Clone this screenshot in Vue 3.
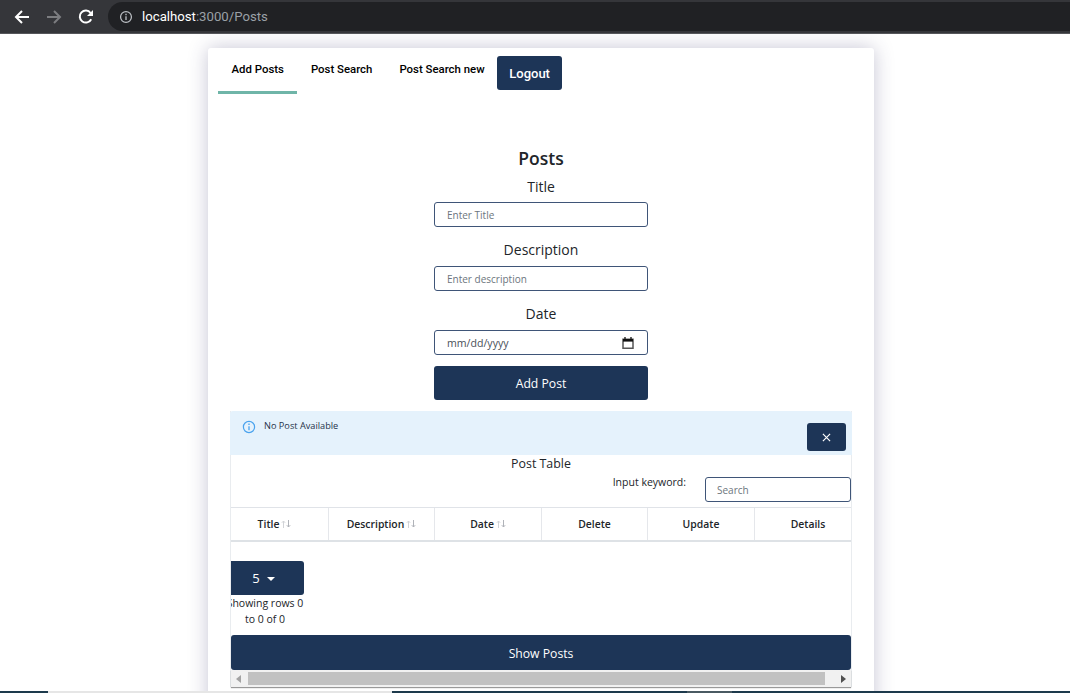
<template>
  <div class="page">
    <header class="chrome">
      <svg class="nav-icon" viewBox="0 0 16 16" width="16" height="16">
        <path d="M15 8H2M8 2 2 8l6 6" fill="none" stroke="#fff" stroke-width="2" />
      </svg>
      <svg class="nav-icon" viewBox="0 0 16 16" width="16" height="16">
        <path d="M1 8h13M8 2l6 6-6 6" fill="none" stroke="#7c7d80" stroke-width="2" />
      </svg>
      <svg class="nav-icon" viewBox="0 0 16 16" width="16" height="16">
        <path d="M13.2 10.2A6 6 0 1 1 12.6 4" fill="none" stroke="#fff" stroke-width="2" />
        <path d="M15 1v6H9z" fill="#fff" />
      </svg>
      <div class="omnibox">
        <svg viewBox="0 0 16 16" width="14" height="14">
          <circle cx="8" cy="8" r="6.2" fill="none" stroke="#bdc1c6" stroke-width="1.4" />
          <path d="M8 7v4.4M8 4.4v1.5" stroke="#bdc1c6" stroke-width="1.5" />
        </svg>
        <span class="url"><b>localhost</b>:3000/Posts</span>
      </div>
    </header>

    <main class="content">
      <div class="card">
        <nav class="tabs">
          <a
            v-for="(tab, i) in tabs"
            :key="tab"
            class="tab"
            :class="{ active: i === 0 }"
          >{{ tab }}</a>
          <button class="btn logout">Logout</button>
        </nav>

        <form class="post-form">
          <h2>Posts</h2>
          <label>Title</label>
          <input class="field" placeholder="Enter Title" />
          <label>Description</label>
          <input class="field" placeholder="Enter description" />
          <label>Date</label>
          <div class="field date-field">
            <span>mm/dd/yyyy</span>
            <svg viewBox="0 0 14 14" width="14" height="14">
              <path d="M2 3.2h10v9H2z" fill="none" stroke="#555" stroke-width="1.5" />
              <path d="M2 3h10v2.6H2z" fill="#111" />
              <path d="M4 1v2M10 1v2" stroke="#222" stroke-width="1.4" />
            </svg>
          </div>
          <button type="button" class="btn add-btn">Add Post</button>
        </form>

        <section class="panel">
          <div class="alert">
            <svg class="alert-icon" viewBox="0 0 14 14" width="14" height="14">
              <circle cx="7" cy="7" r="5.6" fill="none" stroke="#4aa3ee" stroke-width="1.2" />
              <path d="M7 6.2v4M7 3.6v1.4" stroke="#4aa3ee" stroke-width="1.3" />
            </svg>
            <span class="alert-text">No Post Available</span>
            <button class="btn close-btn">
              <svg viewBox="0 0 10 10" width="9" height="9">
                <path d="M1 1l8 8M9 1 1 9" stroke="#fff" stroke-width="1.3" />
              </svg>
            </button>
          </div>

          <div class="table-title">Post Table</div>
          <div class="search-row">
            <span class="search-label">Input keyword:</span>
            <input class="search" placeholder="Search" />
          </div>

          <div class="thead">
            <div v-for="col in columns" :key="col.name" class="th">
              {{ col.name }}
              <svg v-if="col.sort" class="sort" viewBox="0 0 10 8" width="10" height="8">
                <path d="M2.5 8V1M.8 2.8 2.5 1l1.7 1.8" fill="none" stroke="#d2d4d8" />
                <path d="M7.5 0v7M5.8 5.2 7.5 7l1.7-1.8" fill="none" stroke="#b0b3b9" />
              </svg>
            </div>
          </div>

          <div class="pager">
            <button class="btn size-btn">5<i class="caret"></i></button>
            <div class="rows-info">Showing rows 0 to 0 of 0</div>
          </div>

          <button class="btn show-btn">Show Posts</button>

          <div class="scrollbar">
            <i class="arrow left"></i>
            <div class="thumb"></div>
            <i class="arrow right"></i>
          </div>
        </section>
      </div>
    </main>

    <div class="taskbar">
      <div class="seg dark start"></div>
      <div class="seg light"></div>
      <div class="seg dark mid"></div>
      <div class="seg gray"></div>
      <div class="seg dark end"></div>
    </div>
  </div>
</template>

<script setup>
const tabs = ['Add Posts', 'Post Search', 'Post Search new']

const columns = [
  { name: 'Title', sort: true },
  { name: 'Description', sort: true },
  { name: 'Date', sort: true },
  { name: 'Delete' },
  { name: 'Update' },
  { name: 'Details' },
]
</script>

<style>
html,
body {
  margin: 0;
  overflow: hidden;
}
</style>

<style scoped>
.page {
  height: 693px;
  overflow: hidden;
  display: flex;
  flex-direction: column;
  background: #fff;
  color: #212529;
  font-family: "Open Sans", "Noto Sans", sans-serif;
}
.chrome {
  flex: none;
  box-sizing: border-box;
  height: 34px;
  display: flex;
  align-items: center;
  padding-left: 14px;
  gap: 16px;
  background: #35363a;
  border-bottom: 1px solid #55565a;
}
.nav-icon {
  flex: none;
}
.omnibox {
  flex: 1;
  height: 29px;
  margin-left: -2px;
  border-radius: 15px 0 0 15px;
  background: #202124;
  display: flex;
  align-items: center;
  gap: 9px;
  padding-left: 11px;
}
.url {
  font: 13.2px "Roboto", sans-serif;
  color: #9aa0a6;
}
.url b {
  font-weight: 400;
  color: #fff;
}
.content {
  flex: 1;
  min-height: 0;
  overflow: hidden;
  padding-top: 14px;
  padding-left: 208px;
}
.card {
  box-sizing: border-box;
  width: 666px;
  height: 700px;
  padding: 0 22px;
  border-radius: 3px;
  background: #fff;
  box-shadow: 0 0 20px rgba(50, 45, 100, 0.28);
}
.tabs {
  display: flex;
  align-items: flex-start;
  height: 46px;
  margin: 0 0 0 -12px;
}
.tab {
  box-sizing: border-box;
  height: 46px;
  padding: 14px 13.5px 0;
  font: 500 11.4px "Roboto", sans-serif;
  line-height: 14px;
  color: #000;
  white-space: nowrap;
}
.tab.active {
  border-bottom: 3px solid #6fb5a8;
}
.btn {
  border: 0;
  border-radius: 3px;
  background: #1d3557;
  color: #fff;
  font-family: inherit;
  cursor: pointer;
}
.logout {
  width: 65px;
  height: 34px;
  margin: 8px 0 0 -1px;
  font: 500 13px "Roboto", sans-serif;
}
.post-form {
  display: flex;
  flex-direction: column;
  align-items: center;
  padding-top: 53px;
}
.post-form h2 {
  margin: 0;
  height: 22px;
  font-size: 17.5px;
  font-weight: 600;
  line-height: 22px;
}
.post-form label {
  height: 27px;
  margin-top: 6px;
  font-size: 14px;
  line-height: 24px;
}
.post-form .field + label {
  margin-top: 7px;
  height: 32px;
  line-height: 31px;
}
.field {
  box-sizing: border-box;
  width: 214px;
  height: 25px;
  padding: 0 12px;
  border: 1px solid #3f5578;
  border-radius: 3px;
  font-family: inherit;
  font-size: 10px;
  outline: none;
}
.field::placeholder,
.search::placeholder {
  color: #6c757d;
}
.date-field {
  display: flex;
  align-items: center;
  justify-content: space-between;
  font-size: 10.6px;
  color: #495057;
  padding-right: 12px;
}
.add-btn {
  width: 214px;
  height: 34px;
  margin-top: 11px;
  font-size: 12.2px;
}
.panel {
  margin-top: 11px;
  border-right: 1px solid #e9ecef;
  border-left: 1px solid #e9ecef;
}
.alert {
  display: flex;
  height: 44px;
  box-sizing: border-box;
  margin: 0 -1px;
  padding: 8px 6px 0 12px;
  border-radius: 3px 3px 0 0;
  background: #e5f2fc;
}
.alert-icon {
  margin-top: 1px;
}
.alert-text {
  margin-left: 8px;
  font-size: 9.2px;
  line-height: 14px;
  color: #26324a;
}
.close-btn {
  width: 39px;
  height: 28px;
  margin: 4px 0 0 auto;
  padding: 0;
}
.table-title {
  height: 18px;
  text-align: center;
  font-size: 12.4px;
  line-height: 17px;
}
.search-row {
  display: flex;
  justify-content: flex-end;
  height: 34px;
}
.search-label {
  margin: 2px 19px 0 0;
  font-size: 10.5px;
  line-height: 14px;
}
.search {
  box-sizing: border-box;
  width: 146px;
  height: 25px;
  margin-top: 4px;
  padding: 0 11px;
  border: 1px solid #3f5578;
  border-radius: 3px;
  font-family: inherit;
  font-size: 10px;
  outline: none;
}
.thead {
  display: grid;
  grid-template-columns: 98px 106px 107px 106px 107px 96px;
  height: 35px;
  box-sizing: border-box;
  border-top: 1px solid #e0e3e8;
  border-bottom: 2px solid #dee2e6;
}
.th {
  display: flex;
  align-items: center;
  justify-content: center;
  gap: 2px;
  border-right: 1px solid #e5e7eb;
  font-size: 10.4px;
  font-weight: 600;
}
/* the real table is scrolled sideways, so the outer cells look off-centre */
.th:first-child {
  padding-right: 10px;
}
.th:last-child {
  border-right: 0;
  padding-left: 10px;
}
.pager {
  width: 73px;
  padding-top: 19px;
  overflow: hidden;
  text-align: center;
}
.size-btn {
  display: block;
  width: 73px;
  height: 34px;
  padding: 0 8px 0 0;
  border-radius: 0 3px 3px 0;
  font-size: 13px;
}
.caret {
  display: inline-block;
  margin-left: 7px;
  vertical-align: 2px;
  border-top: 4px solid #fff;
  border-right: 4px solid transparent;
  border-left: 4px solid transparent;
}
.rows-info {
  box-sizing: border-box;
  width: 78px;
  height: 40px;
  margin-left: -5px;
  font-size: 10.5px;
  line-height: 16px;
}
.show-btn {
  display: block;
  width: 100%;
  height: 35px;
  padding-top: 2px;
  font-size: 12.2px;
}
.scrollbar {
  display: flex;
  align-items: center;
  height: 17px;
  background: #f1f1f1;
  box-shadow: 0 1px 1px #999;
}
.thumb {
  flex: 1;
  height: 13px;
  margin: 0 16px 0 7px;
  background: #c1c1c1;
}
.arrow {
  width: 0;
  height: 0;
  border-top: 4px solid transparent;
  border-bottom: 4px solid transparent;
}
.arrow.left {
  margin-left: 5px;
  border-right: 5px solid #a3a3a3;
}
.arrow.right {
  margin-right: 5px;
  border-left: 5px solid #505050;
}
.taskbar {
  flex: none;
  display: flex;
  height: 2px;
}
.seg {
  height: 100%;
}
.dark {
  background: #1d3a4c;
}
.start {
  width: 48px;
}
.light {
  width: 344px;
  background: #e6e6e6;
}
.mid {
  width: 295px;
}
.gray {
  width: 45px;
  background: #4a5a62;
}
.end {
  flex: 1;
}
</style>
